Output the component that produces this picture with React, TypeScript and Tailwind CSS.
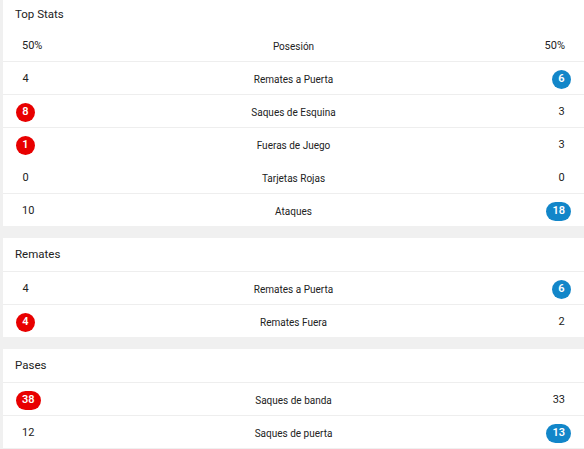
import React from "react";

type Row = { l: string; label: string; r: string; lw?: boolean; rw?: boolean };

const sections: { title: string; first?: boolean; rows: Row[] }[] = [
  {
    title: "Top Stats",
    first: true,
    rows: [
      { l: "50%", label: "Posesión", r: "50%" },
      { l: "4", label: "Remates a Puerta", r: "6", rw: true },
      { l: "8", label: "Saques de Esquina", r: "3", lw: true },
      { l: "1", label: "Fueras de Juego", r: "3", lw: true },
      { l: "0", label: "Tarjetas Rojas", r: "0" },
      { l: "10", label: "Ataques", r: "18", rw: true },
    ],
  },
  {
    title: "Remates",
    rows: [
      { l: "4", label: "Remates a Puerta", r: "6", rw: true },
      { l: "4", label: "Remates Fuera", r: "2", lw: true },
    ],
  },
  {
    title: "Pases",
    rows: [
      { l: "38", label: "Saques de banda", r: "33", lw: true },
      { l: "12", label: "Saques de puerta", r: "13", rw: true },
    ],
  },
];

function Val({ v, win, color }: { v: string; win?: boolean; color: string }) {
  return (
    <span
      className={
        "inline-flex h-[19px] min-w-[19px] items-center justify-center rounded-full px-[6px] text-[11px] " +
        (win ? color + " font-semibold text-white" : "text-[#222]")
      }
    >
      {v}
    </span>
  );
}

export default function App() {
  return (
    <div
      className="min-h-[449px] w-[584px] bg-[#f0f0f0] pl-[3px]"
      style={{ fontFamily: "Roboto, 'Noto Sans', sans-serif" }}
    >
      <div className="flex flex-col gap-[12px]">
        {sections.map((s, si) => (
          <div key={si} className="bg-white">
            <div
              className={
                "flex items-center px-[12px] text-[11.5px] text-[#222] " +
                (s.first ? "h-[29px]" : "h-[34px] border-b border-[#eeeeee] pt-[1px]")
              }
            >
              {s.title}
            </div>
            {s.rows.map((r, ri) => {
              const last = ri === s.rows.length - 1;
              const hidden = s.first && ri === 3;
              return (
                <div
                  key={ri}
                  className={
                    "flex items-center px-[13px] pt-[2px] text-[#222] " +
                    (last ? "h-[32px]" : "h-[33px] border-b " + (hidden ? "border-transparent" : "border-[#eeeeee]"))
                  }
                >
                  <div className="flex w-[80px] justify-start">
                    <Val v={r.l} win={r.lw} color="bg-[#e80000]" />
                  </div>
                  <div className="flex-1 text-center text-[10px]">{r.label}</div>
                  <div className="flex w-[80px] justify-end">
                    <Val v={r.r} win={r.rw} color="bg-[#1286c9]" />
                  </div>
                </div>
              );
            })}
          </div>
        ))}
      </div>
    </div>
  );
}
